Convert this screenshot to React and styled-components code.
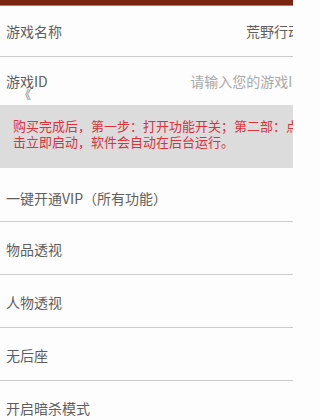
import React from "react";
import styled, { createGlobalStyle } from "styled-components";

const Global = createGlobalStyle`
  html, body {
    margin: 0;
    padding: 0;
    background: #fdfdfd;
    overflow: hidden;
  }
  body {
    font-family: "Noto Sans CJK SC", "Noto Sans", sans-serif;
  }
`;

const Viewport = styled.div`
  width: 293px;
  height: 420px;
  overflow: hidden;
  background: #fdfdfd;
`;

const Page = styled.div`
  width: 310px;
`;

const TopBar = styled.div`
  height: 6px;
  background: #7a2511;
  border-bottom: 1px solid #b07a6a;
  box-sizing: border-box;
`;

const Row = styled.div`
  position: relative;
  display: flex;
  align-items: center;
  justify-content: space-between;
  height: ${(p) => p.$h || 53}px;
  padding: 0 8px 0 6px;
  border-bottom: ${(p) => (p.$noLine ? "none" : "1.5px solid #cbcbcb")};
  box-sizing: border-box;
  font-size: 14px;
  color: #5e5e5e;
`;

const Label = styled.span`
  white-space: nowrap;
  padding-top: ${(p) => p.$shift || 0}px;
`;

const Value = styled.span`
  white-space: nowrap;
  color: ${(p) => (p.$placeholder ? "#a9a9a9" : "#5e5e5e")};
`;

const BackMark = styled.span`
  position: absolute;
  left: 19px;
  top: 32px;
  font-size: 12px;
  line-height: 12px;
  color: #7a7a7a;
`;

const Notice = styled.div`
  height: 63px;
  background: #dcdcdc;
  padding: 13px 0 0 13px;
  box-sizing: border-box;
  color: #d8323c;
  font-size: 13px;
  line-height: 16px;
`;

const NoticeLine = styled.div`
  white-space: nowrap;
`;

const options = ["一键开通VIP（所有功能）", "物品透视", "人物透视", "无后座", "开启暗杀模式"];

export default function App() {
  return (
    <Viewport>
      <Global />
      <Page>
        <TopBar />
        <Row $h={51}>
          <Label>游戏名称</Label>
          <Value>荒野行动</Value>
        </Row>
        <Row $h={48} $noLine>
          <Label>游戏ID</Label>
          <Value $placeholder>请输入您的游戏ID</Value>
          <BackMark>《</BackMark>
        </Row>
        <Notice>
          <NoticeLine>购买完成后，第一步：打开功能开关；第二部：点</NoticeLine>
          <NoticeLine>击立即启动，软件会自动在后台运行。</NoticeLine>
        </Notice>
        {options.map((o, i) => (
          <Row key={o} $h={i === 0 ? 54 : 53}>
            <Label $shift={i === 0 ? 6 : 2}>{o}</Label>
          </Row>
        ))}
      </Page>
    </Viewport>
  );
}
